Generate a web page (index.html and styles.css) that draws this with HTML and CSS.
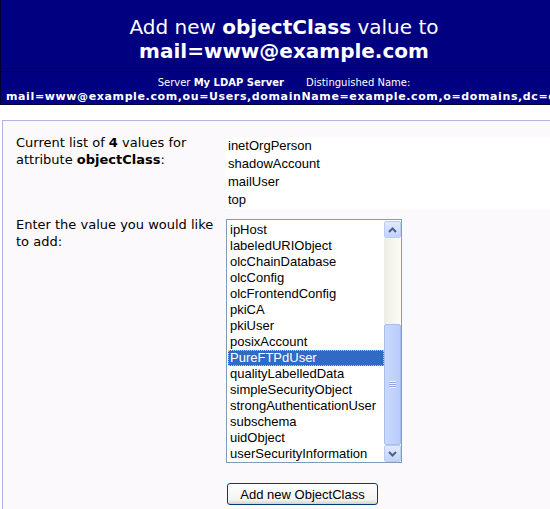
FILE: index.html
```html
<!DOCTYPE html>
<html lang="en">
<head>
  <title>Add new objectClass value</title>
  <meta charset="utf-8">
  <link rel="stylesheet" href="styles.css">
</head>
<body>
  <div class="header">
    <h1 class="title">Add new <b>objectClass</b> value to<br><b>mail=www@example.com</b></h1>
    <div class="info">
      <div class="server">Server <b>My LDAP Server</b><span class="spacer"></span>Distinguished Name:</div>
      <div class="dn">mail=www@example.com,ou=Users,domainName=example.com,o=domains,dc=example,dc=com</div>
    </div>
  </div>

  <div class="box">
    <div class="row">
      <div class="label">Current list of <b>4</b> values for attribute <b>objectClass</b>:</div>
      <div class="values">
        <div>inetOrgPerson</div>
        <div>shadowAccount</div>
        <div>mailUser</div>
        <div>top</div>
      </div>
    </div>

    <div class="row">
      <div class="label">Enter the value you would like to add:</div>
      <div class="listbox">
        <div class="options">
          <div class="option">ipHost</div>
          <div class="option">labeledURIObject</div>
          <div class="option">olcChainDatabase</div>
          <div class="option">olcConfig</div>
          <div class="option">olcFrontendConfig</div>
          <div class="option">pkiCA</div>
          <div class="option">pkiUser</div>
          <div class="option">posixAccount</div>
          <div class="option selected">PureFTPdUser</div>
          <div class="option">qualityLabelledData</div>
          <div class="option">simpleSecurityObject</div>
          <div class="option">strongAuthenticationUser</div>
          <div class="option">subschema</div>
          <div class="option">uidObject</div>
          <div class="option">userSecurityInformation</div>
        </div>
        <div class="scrollbar">
          <div class="sb-btn">
            <svg width="9" height="6" viewBox="0 0 9 6"><path d="M1 5 L4.5 1.5 L8 5" fill="none" stroke="#4d6185" stroke-width="2"/></svg>
          </div>
          <div class="sb-track"></div>
          <div class="sb-thumb"><span class="grip"></span></div>
          <div class="sb-btn">
            <svg width="9" height="6" viewBox="0 0 9 6"><path d="M1 1 L4.5 4.5 L8 1" fill="none" stroke="#4d6185" stroke-width="2"/></svg>
          </div>
        </div>
      </div>
    </div>

    <div class="actions">
      <button class="btn" type="button">Add new ObjectClass</button>
    </div>
  </div>
</body>
</html>
```

FILE: styles.css
```css
html, body {
  overflow: hidden;
}

body {
  margin: 0;
  background-color: #ffffff;
  color: #000000;
  font-family: "DejaVu Sans", Verdana, sans-serif;
  font-size: 13px;
}

.header {
  width: 566px;
  background-color: #000080;
  border: 1px solid #000033;
  border-top: 0;
  color: #ffffff;
  text-align: center;
  overflow: hidden;
}

.title {
  margin: 0;
  padding: 15px 0 8px;
  font-size: 20px;
  font-weight: normal;
  line-height: 24px;
  border-bottom: 1px solid #000033;
}

.info {
  padding-top: 4px;
}

.server {
  font-size: 10px;
  line-height: 14px;
}

.spacer {
  display: inline-block;
  width: 22px;
}

.dn {
  font-size: 11px;
  font-weight: bold;
  line-height: 14px;
  letter-spacing: 0.62px;
  white-space: nowrap;
  text-align: left;
  padding-left: 5px;
}

.box {
  width: 600px;
  margin: 15px 0 0 2px;
  padding: 13px 0 20px 13px;
  border: 1px solid #b4b4dc;
  background-color: #fcf9fc;
}

.row {
  display: grid;
  grid-template-columns: 200px auto;
  column-gap: 10px;
  margin-bottom: 7px;
}

.label {
  line-height: 17px;
}

.values {
  margin-top: 3px;
  padding-left: 2px;
  background-color: #ffffff;
  font-family: "Liberation Sans", Arial, sans-serif;
  font-size: 13px;
  line-height: 18px;
}

.listbox {
  display: flex;
  width: 174px;
  height: 242px;
  margin-top: 3px;
  border: 1px solid #7f9db9;
  background-color: #ffffff;
  font-family: "Liberation Sans", Arial, sans-serif;
  font-size: 13px;
}

.options {
  flex: 1;
  padding: 2px 0 0 1px;
}

.option {
  height: 16px;
  line-height: 16px;
  padding-left: 2px;
  white-space: nowrap;
}

.option.selected {
  background-color: #316ac5;
  color: #ffffff;
  outline: 1px dotted #e8c878;
  outline-offset: -1px;
}

.scrollbar {
  width: 17px;
  display: flex;
  flex-direction: column;
  padding-top: 1px;
}

.sb-btn {
  height: 15px;
  border: 1px solid #b9ccf7;
  border-radius: 2px;
  background: linear-gradient(#e1eafe, #c1d3fb);
  display: flex;
  align-items: center;
  justify-content: center;
}

.sb-track {
  height: 86px;
  background: linear-gradient(90deg, #eeede5, #fdfdf6);
}

.sb-thumb {
  flex: 1;
  border: 1px solid #a7bcf1;
  border-radius: 2px;
  background: linear-gradient(90deg, #c9d8fc, #b9cdfa);
  display: flex;
  align-items: center;
  justify-content: center;
}

.grip {
  width: 7px;
  height: 7px;
  background: repeating-linear-gradient(#eef3fe 0, #eef3fe 1px, #8aa4e4 1px, #8aa4e4 2px);
}

.actions {
  padding-left: 211px;
  margin-top: 20px;
}

.btn {
  width: 151px;
  height: 22px;
  padding: 0;
  border: 1px solid #003c74;
  border-radius: 3px;
  background: linear-gradient(#ffffff, #f4f3ee 80%, #d6d0c5);
  font-family: "Liberation Sans", Arial, sans-serif;
  font-size: 13px;
  color: #000000;
}
```
